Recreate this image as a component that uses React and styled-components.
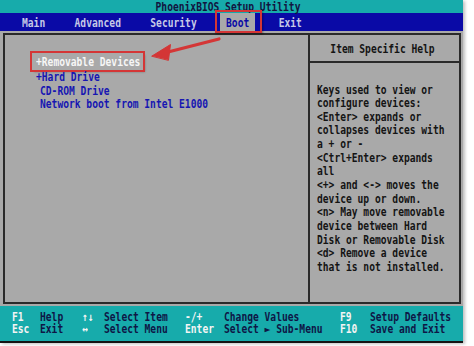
import React from 'react';
import styled, { createGlobalStyle } from 'styled-components';

const Global = createGlobalStyle`
  html, body { margin: 0; padding: 0; background: #ffffff; }
  body { width: 474px; height: 346px; overflow: hidden; }
`;

const TEAL = '#17abab';
const BLUE = '#0a0aa6';
const GRAY = '#a9a9a9';
const RED = '#d43636';

const Screen = styled.div`
  position: relative;
  width: 463px;
  height: 341px;
  display: flex;
  flex-direction: column;
  background: ${GRAY};
  border-bottom: 2px solid #141414;
  font-family: "DejaVu Sans Mono", "Liberation Mono", monospace;
  font-size: 9.63px;
  font-weight: bold;
  box-shadow: 2px 1px 3px rgba(0, 0, 0, 0.25);
`;

const Tall = styled.span`
  display: inline-block;
  transform: scaleY(1.22);
  transform-origin: center;
  white-space: pre;
`;

const TitleBar = styled.div`
  height: 13px;
  background: ${TEAL};
  color: #121440;
  display: flex;
  align-items: center;
  justify-content: center;
  padding-right: 7px;
  line-height: 13px;
`;

const MenuBar = styled.div`
  height: 18px;
  background: ${BLUE};
  display: flex;
  align-items: stretch;
  gap: 17.4px;
  padding-left: 16px;
`;

const MenuItem = styled.div`
  position: relative;
  display: flex;
  align-items: center;
  padding: 0 6px;
  color: ${(p) => (p.$active ? BLUE : '#c6c9e6')};
  background: ${(p) => (p.$active ? GRAY : 'transparent')};
  &::after {
    content: '';
    display: ${(p) => (p.$active ? 'block' : 'none')};
    position: absolute;
    left: -5px;
    right: -7px;
    top: -3px;
    bottom: -2px;
    border: 2px solid ${RED};
    box-shadow: 1px 1px 2px rgba(0, 0, 0, 0.35);
  }
`;

const Body = styled.div`
  flex: 1;
  padding: 2px 2px 2px 3px;
  display: flex;
`;

const Frame = styled.div`
  flex: 1;
  display: grid;
  grid-template-columns: 303px 1fr;
  border: 2px solid #2a2a2a;
`;

const LeftPane = styled.div`
  padding: 20px 0 0 31px;
  display: flex;
  flex-direction: column;
  align-items: flex-start;
`;

const DeviceRow = styled.div`
  position: relative;
  line-height: 13.4px;
  height: 13.4px;
  padding-left: ${(p) => (p.$indent ? '4px' : '0')};
  color: ${(p) => (p.$selected ? '#f6f6f6' : '#1616b2')};
  ${(p) =>
    p.$selected &&
    `
    padding: 2px 3px 0 4px;
    margin: -2px -3px 0 -4px;
    height: 15.4px;
    outline: 2px solid ${RED};
    box-shadow: 2px 2px 2px rgba(0,0,0,0.3);
  `}
`;

const RightPane = styled.div`
  border-left: 2px solid #2a2a2a;
  display: flex;
  flex-direction: column;
`;

const HelpHeader = styled.div`
  height: 26px;
  border-bottom: 2px solid #2a2a2a;
  display: flex;
  align-items: center;
  justify-content: center;
  padding-right: 4px;
  color: #141414;
`;

const HelpText = styled.div`
  padding: 19.5px 0 0 7px;
  color: #141414;
`;

const HelpLine = styled.div`
  line-height: 13.65px;
  height: 13.65px;
`;

const StatusBar = styled.div`
  height: 30px;
  background: ${TEAL};
  padding: 5px 0 0 12px;
  display: grid;
  grid-template-columns: 28px 42px 22px 81px 39px 116px 30px 1fr;
  grid-auto-rows: 12px;
  line-height: 12px;
`;

const Key = styled.div`
  color: #f4f4f4;
`;

const Desc = styled.div`
  color: #0e1646;
`;

const Overlay = styled.svg`
  position: absolute;
  left: 0;
  top: 0;
  width: 463px;
  height: 341px;
  pointer-events: none;
`;

const menus = ['Main', 'Advanced', 'Security', 'Boot', 'Exit'];

const devices = [
  { label: '+Removable Devices', selected: true },
  { label: '+Hard Drive' },
  { label: 'CD-ROM Drive', indent: true },
  { label: 'Network boot from Intel E1000', indent: true },
];

const help = [
  'Keys used to view or',
  'configure devices:',
  '<Enter> expands or',
  'collapses devices with',
  'a + or -',
  '<Ctrl+Enter> expands',
  'all',
  '<+> and <-> moves the',
  'device up or down.',
  '<n> May move removable',
  'device between Hard',
  'Disk or Removable Disk',
  '<d> Remove a device',
  'that is not installed.',
];

const status = [
  ['F1', 'Help', '↑↓', 'Select Item', '-/+', 'Change Values', 'F9', 'Setup Defaults'],
  ['Esc', 'Exit', '↔', 'Select Menu', 'Enter', 'Select ► Sub-Menu', 'F10', 'Save and Exit'],
];

export default function App() {
  return (
    <>
      <Global />
      <Screen>
        <TitleBar>
          <Tall>PhoenixBIOS Setup Utility</Tall>
        </TitleBar>
        <MenuBar>
          {menus.map((m) => (
            <MenuItem key={m} $active={m === 'Boot'}>
              <Tall>{m}</Tall>
            </MenuItem>
          ))}
        </MenuBar>
        <Body>
          <Frame>
            <LeftPane>
              {devices.map((d) => (
                <DeviceRow key={d.label} $selected={d.selected} $indent={d.indent}>
                  <Tall>{d.label}</Tall>
                </DeviceRow>
              ))}
            </LeftPane>
            <RightPane>
              <HelpHeader>
                <Tall>Item Specific Help</Tall>
              </HelpHeader>
              <HelpText>
                {help.map((h, i) => (
                  <HelpLine key={i}>
                    <Tall>{h}</Tall>
                  </HelpLine>
                ))}
              </HelpText>
            </RightPane>
          </Frame>
        </Body>
        <StatusBar>
          {status.map((row, r) =>
            row.map((cell, c) =>
              c % 2 === 0 ? (
                <Key key={`${r}-${c}`}>
                  <Tall>{cell}</Tall>
                </Key>
              ) : (
                <Desc key={`${r}-${c}`}>
                  <Tall>{cell}</Tall>
                </Desc>
              )
            )
          )}
        </StatusBar>
        <Overlay viewBox="0 0 463 341">
          <g fill={RED} stroke={RED} strokeLinecap="round" strokeLinejoin="round">
            <line x1="219" y1="39" x2="166" y2="52.5" strokeWidth="3.2" />
            <polygon points="152,56 170.5,44.5 168.5,60" strokeWidth="1" />
          </g>
        </Overlay>
      </Screen>
    </>
  );
}
